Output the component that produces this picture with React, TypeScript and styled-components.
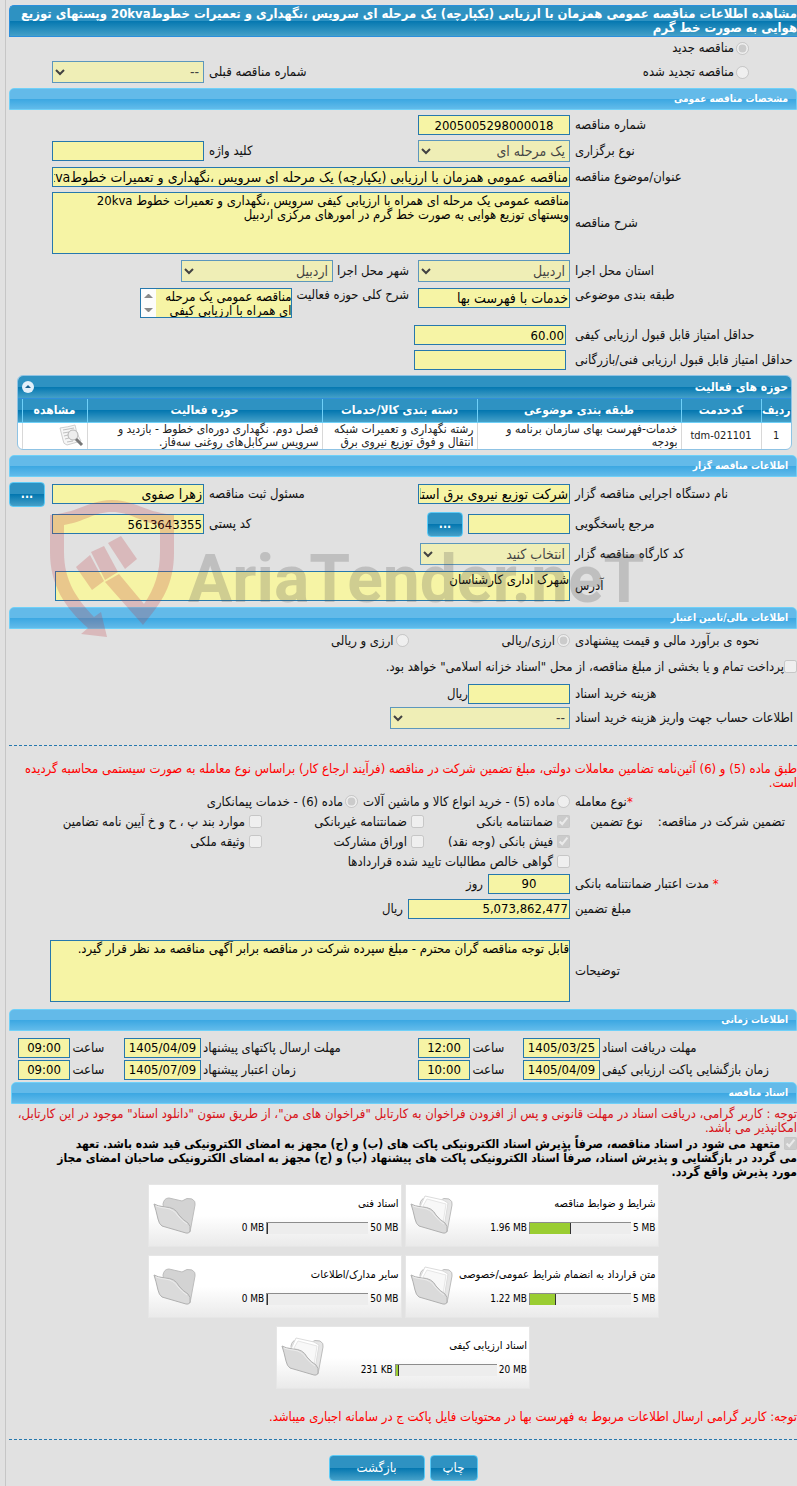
import React, { useId } from "react";
import styled, { createGlobalStyle, css } from "styled-components";

const GlobalStyle = createGlobalStyle`
  *, *::before, *::after { box-sizing: border-box; }
  body {
    margin: 0;
    background: #e1e1e1;
    color: #111;
    font-family: "DejaVu Sans Condensed", "DejaVu Sans", sans-serif;
    font-size: 13px;
    line-height: 14px;
    overflow-x: hidden;
  }
  input, select, textarea, button { font-family: inherit; margin: 0; }
`;

const darkBar = css`
  background: linear-gradient(#2e92c2 0 49%, #0477b0 50%, #45a0c8);
`;

const Page = styled.main`
  margin-left: 5px;
  padding: 5px 0 5px 3px;
  border-left: 1px solid #c6c6c6;
  overflow: hidden;
`;

const PageTitle = styled.h1`
  ${darkBar}
  margin: 0;
  min-height: 32px;
  padding: 1px 0;
  border: 1px solid #2b8fdc;
  border-right: 0;
  border-radius: 5px 0 0 0;
  color: #fff;
  font-size: 13px;
  line-height: 14px;
`;

const SectionTitle = styled.h2<{ $inset?: boolean }>`
  margin: 0 0 0 ${(p) => (p.$inset ? 2 : 0)}px;
  height: 22px;
  padding: 0 8px;
  border: 1px solid #6fd0f8;
  border-radius: 5px 5px 0 0;
  background: linear-gradient(#63bae9 0 49%, #3ba7e2 50%, #62bbea);
  color: #fff;
  font-size: 10px;
  line-height: 20px;
`;

const Body = styled.div<{ $pad?: string; $gap?: number }>`
  position: relative;
  display: flex;
  flex-direction: column;
  gap: ${(p) => p.$gap ?? 5}px;
  padding: ${(p) => p.$pad ?? "5px 0"};
`;

const Row = styled.div<{ $top?: boolean; $height?: number }>`
  display: grid;
  grid-template-columns:
    minmax(0, 222fr) minmax(0, 157fr) minmax(0, 209fr)
    minmax(0, 157fr) minmax(0, 43fr);
  align-items: ${(p) => (p.$top ? "start" : "center")};
  min-height: ${(p) => p.$height ?? 20}px;
  > button { justify-self: end; }
`;

const Label = styled.label`
  justify-self: end;
  text-align: left;
  white-space: nowrap;
`;

const Cell = styled.div<{ $span?: number; $gap?: number; $indent?: boolean }>`
  grid-column: span ${(p) => p.$span ?? 1};
  display: flex;
  align-items: center;
  gap: ${(p) => p.$gap ?? 5}px;
  padding-right: ${(p) => (p.$indent ? 48 : 5)}px;
`;

const Inline = styled.div<{ $top?: boolean }>`
  grid-column: span 3;
  display: flex;
  align-items: ${(p) => (p.$top ? "flex-start" : "center")};
  gap: 4px;
  padding-right: 9px;
`;

const fieldLook = css`
  border: 1px solid #2678ad;
  border-radius: 0;
  background: #f6f4a5;
  color: #000;
`;

const Field = styled.input<{ $w?: string; $center?: boolean }>`
  ${fieldLook}
  width: ${(p) => p.$w ?? "100%"};
  height: 20px;
  padding: 0 1px;
  font-size: ${(p) => (p.dir === "ltr" ? 13 : 14)}px;
  text-align: ${(p) => (p.$center ? "center" : "right")};
`;

const Area = styled.textarea<{ $w: string; $h: number }>`
  ${fieldLook}
  display: block;
  width: ${(p) => p.$w};
  max-width: 100%;
  height: ${(p) => p.$h}px;
  padding: 1px 0;
  font-size: 13px;
  line-height: 14px;
  resize: none;
  overflow: hidden;
`;

const Select = styled.select<{ $w?: string }>`
  ${fieldLook}
  width: ${(p) => p.$w ?? "100%"};
  height: 22px;
  font-size: 14px;
  opacity: 0.7;
`;

const ScrollBox = styled.div`
  display: flex;
  width: 152px;
  height: 30px;
  border: 1px solid #2678ad;
  textarea { flex: 1; height: 28px; border: 0; min-width: 0; }
`;

const ScrollStrip = styled.svg`
  width: 15px;
  height: 28px;
  background: #fcfcfc;
`;

const Tick = styled.input`
  flex: none;
  width: 13px;
  height: 13px;
  vertical-align: -2px;
`;

const Choice = styled.label<{ $gap?: number }>`
  display: inline-flex;
  align-items: center;
  gap: ${(p) => p.$gap ?? 2}px;
  white-space: nowrap;
`;

const CreditChoice = styled(Choice)`
  min-height: 18px;
`;

const Button = styled.button<{ $w: number }>`
  ${darkBar}
  width: ${(p) => p.$w}px;
  height: 26px;
  padding: 0;
  border: 1px solid #5ccbf7;
  border-radius: 4px;
  color: #fff;
  font-size: 13px;
`;

const MoreButton = styled(Button)`
  height: 25px;
  font-size: 12px;
  font-weight: 700;
`;

const Panel = styled.section`
  margin: 0 5px 0 8px;
  border: 1px solid #8fc3e4;
  border-radius: 6px;
  overflow: hidden;
  background: #fff;
`;

const PanelHead = styled.div`
  ${darkBar}
  display: flex;
  align-items: center;
  justify-content: space-between;
  height: 23px;
  padding: 0 3px 0 4px;
  border-bottom: 1px solid #2f8fdb;
  color: #fff;
  h3 { margin: 0; font-size: 12px; }
`;

const Collapse = styled.button`
  width: 12px;
  height: 12px;
  padding: 0;
  border: 0;
  border-radius: 50%;
  background: #e3f0fa;
  svg { display: block; }
`;

const Table = styled.table`
  width: 100%;
  table-layout: fixed;
  border-collapse: collapse;
  th {
    ${darkBar}
    height: 23px;
    padding: 0;
    border-left: 1px solid #6fd0f8;
    border-bottom: 1px solid #6fd0f8;
    color: #fff;
    font-size: 12px;
    white-space: nowrap;
  }
  td {
    height: 26px;
    padding: 0 3px;
    border-left: 1px solid #d8d8d8;
    color: #222;
    font-size: 12px;
    line-height: 13px;
    text-align: right;
  }
  td.mid { font-size: 11px; text-align: center; }
  th:last-child, td:last-child { border-left: 0; }
  td svg { display: block; }
`;

const Rule = styled.hr`
  width: 100%;
  margin: 0;
  border: 0;
  border-top: 1px dashed #2678ad;
`;

const Notice = styled.p<{ $dark?: boolean }>`
  margin: 0 0 2px;
  color: ${(p) => (p.$dark ? "#d81118" : "#f00")};
`;

const Pledge = styled.p`
  margin: 0;
  color: #000;
  font-size: 12px;
  font-weight: 700;
`;

const Star = styled.span`
  color: #f00;
`;

const TickGrid = styled.div`
  display: grid;
  grid-template-columns: 146px 162px 1fr;
  padding-right: 5px;
`;

const GuaranteeRow = styled.div`
  display: grid;
  grid-template-columns: minmax(0, 222fr) minmax(0, 566fr);
  align-items: center;
  min-height: 20px;
`;

const AmountRows = styled.div`
  display: grid;
  gap: 5px;
  padding-top: 2px;
`;

const GroupLabel = styled.div`
  display: flex;
  gap: 15px;
  padding-right: 12px;
  white-space: nowrap;
`;

const TimeRow = styled.div`
  display: grid;
  grid-template-columns:
    minmax(0, 195fr) minmax(0, 95fr) minmax(0, 37fr) minmax(0, 52fr)
    minmax(0, 215fr) minmax(0, 96fr) minmax(0, 37fr) minmax(0, 52fr)
    minmax(0, 9fr);
  align-items: center;
`;

const DateCell = styled.div`
  padding-right: 2px;
`;

const HourLabel = styled(Label)`
  justify-self: center;
`;

const Cards = styled.div`
  display: flex;
  flex-wrap: wrap;
  justify-content: center;
  gap: 8px 3px;
  width: 520px;
  max-width: 100%;
  margin: 0 auto;
`;

const Card = styled.article`
  display: flex;
  align-items: center;
  width: 254px;
  height: 63px;
  padding: 0 2px 0 4px;
  border: 1px solid #e6e6e6;
  background: linear-gradient(#fff 50%, #eaeaea);
  color: #000;
`;

const CardText = styled.div`
  flex: 1;
  min-width: 0;
  display: flex;
  flex-direction: column;
  gap: 12px;
  h3 {
    margin: 0;
    font-size: 11px;
    line-height: 13px;
    font-weight: 400;
    white-space: nowrap;
  }
`;

const Usage = styled.div`
  display: flex;
  align-items: center;
  gap: 2px;
  font-size: 10px;
  line-height: 12px;
  span { direction: ltr; white-space: nowrap; }
`;

const Meter = styled.div`
  width: 102px;
  height: 12px;
  direction: ltr;
  border-top: 1px solid #8c8c8c;
  border-left: 1px solid #8c8c8c;
  background: #ededed;
`;

const MeterFill = styled.div`
  height: 11px;
  min-width: 1px;
  border-right: 1px solid #333;
  background: #9acd32;
`;

const Actions = styled.div`
  display: flex;
  justify-content: center;
  gap: 5px;
  padding-top: 15px;
`;

const Watermark = styled.svg`
  position: absolute;
  left: 31px;
  top: 13px;
  width: 620px;
  height: 155px;
  pointer-events: none;
  z-index: 1;
`;

const WordMark = styled.text`
  font-family: Roboto, "Liberation Sans", sans-serif;
  font-weight: 700;
  direction: ltr;
`;

const Spacer = styled.div<{ $h: number }>`
  height: ${(p) => p.$h}px;
`;

type TextFieldProps = {
  label: string;
  value?: string;
  w?: string;
  center?: boolean;
  ltr?: boolean;
};

function TextPair({ label, value = "", w, center, ltr }: TextFieldProps) {
  const id = useId();
  return (
    <>
      <Label htmlFor={id}>{label}</Label>
      <Cell>
        <Field id={id} $w={w} $center={center} dir={ltr ? "ltr" : "rtl"} value={value} readOnly />
      </Cell>
    </>
  );
}

function SelectPair({ label, value, w }: { label: string; value: string; w?: string }) {
  const id = useId();
  return (
    <>
      <Label htmlFor={id}>{label}</Label>
      <Cell>
        <Select id={id} $w={w} disabled>
          <option>{value}</option>
        </Select>
      </Cell>
    </>
  );
}

function Toggle({ kind, label, on, gap }: { kind: "radio" | "checkbox"; label: string; on?: boolean; gap?: number }) {
  return (
    <Choice $gap={gap}>
      <Tick type={kind} checked={!!on} disabled readOnly />
      {label}
    </Choice>
  );
}

function FolderIcon({ filled }: { filled: boolean }) {
  return (
    <svg width="44" height="40" viewBox="0 0 44 40" aria-hidden="true">
      <path
        d="M10 9Q11 3 16 3L29 6Q34 2 39 4Q43 6 42 10L37 37L34 36L12 24Z"
        fill={filled ? "#e6e6e6" : "#d3d3d3"}
        stroke="#bdbdbd"
      />
      {filled && (
        <>
          <path d="M10 12L15 1L33 5L38 8L34 32L26 24Z" fill="#fff" stroke="#dcdcdc" />
          <path d="M13 11L17 4L36 9L33 28Z" fill="#f8f8f8" stroke="#e6e6e6" />
        </>
      )}
      <path
        d="M1 9Q4 11 12 12Q22 12 26 20Q30 25 35 28Q38 31 37 36Q36 39 33 38L9 31Q6 29 5 24Q3 15 1 9Z"
        fill="#dadada"
        stroke="#b0b0b0"
      />
      <path d="M3 11Q8 13 12 13Q21 14 25 21Q29 26 34 29" fill="none" stroke="#ededed" />
    </svg>
  );
}

function ViewIcon() {
  return (
    <svg width="25" height="24" viewBox="0 0 25 24" aria-hidden="true">
      <path d="M1 4Q9 3 16 1Q17 10 22 17L8 21Q4 20 4 16Z" fill="#f6f6f6" stroke="#cfcfcf" />
      <path d="M4 6L15 4M4 9L10 8M5 12L9 11M6 15L10 14M8 18L14 17" stroke="#c0c0c0" />
      <circle cx="14" cy="11" r="5" fill="#ececec" fillOpacity="0.8" stroke="#b5b5b5" />
      <path d="M17 15L23 21" stroke="#777" strokeWidth="3" />
    </svg>
  );
}

function Logo() {
  return (
    <Watermark viewBox="0 0 620 155" aria-hidden="true">
      <g fill="#bf323c" fillOpacity="0.23">
        <path d="M10 25C40 22 50 10 72 10C94 10 104 22 134 25L134 62C134 95 122 112 103 135L65 92L79 84L104 114C115 98 120 82 120 62L120 35C100 32 90 22 72 22C54 22 44 32 24 35L24 62C24 92 38 110 54 127L61 122L67 147L41 144L48 138C25 118 10 95 10 62Z" />
        <path d="M68 53L81 46L97 69L85 79Z" />
        <path d="M51 62L64 56L78 82L65 90Z" />
        <path d="M36 77L50 65L64 91L52 100Z" />
      </g>
      <WordMark x="148" y="112" fontSize="66" fill="#555" fillOpacity="0.24">
        AriaTender.neT
      </WordMark>
    </Watermark>
  );
}

type TimeProps = { label: string; date: string; time: string };

function TimePair({ label, date, time }: TimeProps) {
  const dateId = useId();
  const timeId = useId();
  return (
    <>
      <Label htmlFor={dateId}>{label}</Label>
      <DateCell>
        <Field id={dateId} $w="77px" $center dir="ltr" value={date} readOnly />
      </DateCell>
      <HourLabel htmlFor={timeId}>ساعت</HourLabel>
      <div>
        <Field id={timeId} $w="52px" $center dir="ltr" value={time} readOnly />
      </div>
    </>
  );
}

const documents = [
  { title: "شرایط و ضوابط مناقصه", limit: "5 MB", used: "1.96 MB", percent: 41 },
  { title: "اسناد فنی", limit: "50 MB", used: "0 MB", percent: 0 },
  { title: "متن قرارداد به انضمام شرایط عمومی/خصوصی", limit: "5 MB", used: "1.22 MB", percent: 26 },
  { title: "سایر مدارک/اطلاعات", limit: "50 MB", used: "0 MB", percent: 0 },
  { title: "اسناد ارزیابی کیفی", limit: "20 MB", used: "231 KB", percent: 3 },
];

export default function App() {
  return (
    <Page dir="rtl" lang="fa">
      <GlobalStyle />
      <PageTitle>
        مشاهده اطلاعات مناقصه عمومی همزمان با ارزیابی (یکپارچه) یک مرحله ای سرویس ،نگهداری و تعمیرات خطوط20kva وپستهای توزیع هوایی به صورت خط گرم
      </PageTitle>

      <Body $pad="3px 0 5px">
        <Row $height={16}>
          <Cell $span={5} $indent>
            <Toggle kind="radio" label="مناقصه جدید" on />
          </Cell>
        </Row>
        <Row>
          <Cell $span={2} $indent>
            <Toggle kind="radio" label="مناقصه تجدید شده" />
          </Cell>
          <SelectPair label="شماره مناقصه قبلی" value="--" />
        </Row>
      </Body>

      <SectionTitle>مشخصات مناقصه عمومی</SectionTitle>
      <Body>
        <Row>
          <TextPair label="شماره مناقصه" value="2005005298000018" center ltr />
        </Row>
        <Row>
          <SelectPair label="نوع برگزاری" value="یک مرحله ای" />
          <TextPair label="کلید واژه" />
        </Row>
        <Row>
          <Label htmlFor="subject">عنوان/موضوع مناقصه</Label>
          <Cell $span={3}>
            <Field id="subject" readOnly value="مناقصه عمومی همزمان با ارزیابی (یکپارچه) یک مرحله ای سرویس ،نگهداری و تعمیرات خطوط20kva وپستهای توزیع هوایی به صورت خط گرم" />
          </Cell>
        </Row>
        <Row>
          <Label htmlFor="details">شرح مناقصه</Label>
          <Cell $span={3}>
            <Area
              id="details"
              $w="100%"
              $h={62}
              readOnly
              value="مناقصه عمومی یک مرحله ای همراه با ارزیابی کیفی سرویس ،نگهداری و تعمیرات خطوط 20kva وپستهای توزیع هوایی به صورت خط گرم در امورهای مرکزی اردبیل"
            />
          </Cell>
        </Row>
        <Row $height={24}>
          <SelectPair label="استان محل اجرا" value="اردبیل" />
          <Inline>
            <label htmlFor="city">شهر محل اجرا</label>
            <Select id="city" $w="152px" disabled>
              <option>اردبیل</option>
            </Select>
          </Inline>
        </Row>
        <Row $top $height={32}>
          <TextPair label="طبقه بندی موضوعی" value="خدمات با فهرست بها" />
          <Inline $top>
            <label htmlFor="scope">شرح کلی حوزه فعالیت</label>
            <ScrollBox>
              <Area id="scope" $w="auto" $h={28} readOnly value="مناقصه عمومی یک مرحله ای همراه با ارزیابی کیفی" />
              <ScrollStrip viewBox="0 0 15 28" aria-hidden="true">
                <path d="M3 9H12L8 5H7ZM3 19H12L8 23H7Z" fill="#8a8a8a" />
              </ScrollStrip>
            </ScrollBox>
          </Inline>
        </Row>
        <Row>
          <Label htmlFor="minQuality">حداقل امتیاز قابل قبول ارزیابی کیفی</Label>
          <Inline>
            <Field id="minQuality" $w="152px" dir="ltr" value="60.00" readOnly />
          </Inline>
        </Row>
        <Row>
          <Label htmlFor="minTech">حداقل امتیاز قابل قبول ارزیابی فنی/بازرگانی</Label>
          <Inline>
            <Field id="minTech" $w="152px" dir="ltr" value="" readOnly />
          </Inline>
        </Row>
      </Body>

      <Panel>
        <PanelHead>
          <h3>حوزه های فعالیت</h3>
          <Collapse type="button" aria-label="بستن">
            <svg width="12" height="12" viewBox="0 0 12 12" aria-hidden="true">
              <path d="M3 7L6 4L9 7Z" fill="#19608f" />
            </svg>
          </Collapse>
        </PanelHead>
        <Table>
          <colgroup>
            <col width="30" />
            <col width="80" />
            <col />
            <col width="155" />
            <col width="235" />
            <col width="65" />
            <col width="4" />
          </colgroup>
          <thead>
            <tr>
              <th>ردیف</th>
              <th>کدخدمت</th>
              <th>طبقه بندی موضوعی</th>
              <th>دسته بندی کالا/خدمات</th>
              <th>حوزه فعالیت</th>
              <th>مشاهده</th>
              <th aria-hidden="true" />
            </tr>
          </thead>
          <tbody>
            <tr>
              <td className="mid">1</td>
              <td className="mid">tdm-021101</td>
              <td>خدمات-فهرست بهای سازمان برنامه و بودجه</td>
              <td>رشته نگهداری و تعمیرات شبکه انتقال و فوق توزیع نیروی برق</td>
              <td>فصل دوم. نگهداری دوره‌ای خطوط - بازدید و سرویس سرکابل‌های روغنی سه‌فاز.</td>
              <td><ViewIcon /></td>
              <td aria-hidden="true" />
            </tr>
          </tbody>
        </Table>
      </Panel>
      <Spacer $h={5} />

      <SectionTitle>اطلاعات مناقصه گزار</SectionTitle>
      <Body $pad="5px 0 6px">
        <Logo />
        <Row $height={25}>
          <TextPair label="نام دستگاه اجرایی مناقصه گزار" value="شرکت توزیع نیروی برق استان اردبیل" />
          <TextPair label="مسئول ثبت مناقصه" value="زهرا صفوی" />
          <MoreButton type="button" $w={36}>...</MoreButton>
        </Row>
        <Row $height={25}>
          <Label htmlFor="contact">مرجع پاسخگویی</Label>
          <Cell>
            <Field id="contact" $w="102px" value="" readOnly />
            <MoreButton type="button" $w={36}>...</MoreButton>
          </Cell>
          <TextPair label="کد پستی" value="5613643355" ltr />
        </Row>
        <Row $height={24}>
          <SelectPair label="کد کارگاه مناقصه گزار" value="انتخاب کنید" w="150px" />
        </Row>
        <Row $height={30}>
          <Label htmlFor="address">آدرس</Label>
          <Cell $span={3}>
            <Area id="address" $w="515px" $h={30} readOnly value="شهرک اداری کارشناسان" />
          </Cell>
        </Row>
      </Body>

      <SectionTitle>اطلاعات مالی/تامین اعتبار</SectionTitle>
      <Body $pad="0 0 5px">
        <Row $height={24}>
          <Label as="span">نحوه ی برآورد مالی و قیمت پیشنهادی</Label>
          <Cell $span={4} $gap={93}>
            <Toggle kind="radio" label="ارزی/ریالی" on />
            <Toggle kind="radio" label="ارزی و ریالی" />
          </Cell>
        </Row>
        <CreditChoice $gap={0}>
          <Tick type="checkbox" checked={false} disabled readOnly />
          پرداخت تمام و یا بخشی از مبلغ مناقصه، از محل "اسناد خزانه اسلامی" خواهد بود.
        </CreditChoice>
        <div>
          <Row $height={26}>
            <Label htmlFor="cost">هزینه خرید اسناد</Label>
            <Cell $span={2} $gap={0}>
              <Field id="cost" $w="102px" value="" readOnly />
              ریال
            </Cell>
          </Row>
          <Row $height={22}>
            <Label htmlFor="account">اطلاعات حساب جهت واریز هزینه خرید اسناد</Label>
            <Cell $span={2}>
              <Select id="account" $w="180px" disabled>
                <option>--</option>
              </Select>
            </Cell>
          </Row>
        </div>
      </Body>

      <Body $pad="11px 0 7px">
        <Rule />
        <Spacer $h={6} />
        <div>
          <Notice>
            طبق ماده (5) و (6) آئین‌نامه تضامین معاملات دولتی، مبلغ تضمین شرکت در مناقصه (فرآیند ارجاع کار) براساس نوع معامله به صورت سیستمی محاسبه گردیده است.
          </Notice>
          <GuaranteeRow>
            <Label as="span"><Star>*</Star>نوع معامله</Label>
            <Cell>
              <Toggle kind="radio" label="ماده (5) - خرید انواع کالا و ماشین آلات" />
              <Toggle kind="radio" label="ماده (6) - خدمات پیمانکاری" on />
            </Cell>
          </GuaranteeRow>
          <GuaranteeRow>
            <GroupLabel>
              <span>تضمین شرکت در مناقصه:</span>
              <span>نوع تضمین</span>
            </GroupLabel>
            <TickGrid>
              <Toggle kind="checkbox" label="ضمانتنامه بانکی" on gap={4} />
              <Toggle kind="checkbox" label="ضمانتنامه غیربانکی" gap={4} />
              <Toggle kind="checkbox" label="موارد بند پ ، ح و خ آیین نامه تضامین" gap={4} />
            </TickGrid>
          </GuaranteeRow>
          <GuaranteeRow>
            <span />
            <TickGrid>
              <Toggle kind="checkbox" label="فیش بانکی (وجه نقد)" on gap={4} />
              <Toggle kind="checkbox" label="اوراق مشارکت" gap={4} />
              <Toggle kind="checkbox" label="وثیقه ملکی" gap={4} />
            </TickGrid>
          </GuaranteeRow>
          <GuaranteeRow>
            <span />
            <Cell>
              <Toggle kind="checkbox" label="گواهی خالص مطالبات تایید شده قراردادها" gap={4} />
            </Cell>
          </GuaranteeRow>
          <AmountRows>
            <Row>
              <Label htmlFor="validity"><Star>*</Star> مدت اعتبار ضمانتنامه بانکی</Label>
              <Cell $span={2}>
                <Field id="validity" $w="82px" $center dir="ltr" value="90" readOnly />
                روز
              </Cell>
            </Row>
            <Row>
              <Label htmlFor="amount">مبلغ تضمین</Label>
              <Cell $span={2}>
                <Field id="amount" $w="162px" dir="ltr" value="5,073,862,477" readOnly />
                ریال
              </Cell>
            </Row>
          </AmountRows>
        </div>
        <Spacer $h={11} />
        <Row>
          <Label htmlFor="notes">توضیحات</Label>
          <Cell $span={4}>
            <Area id="notes" $w="520px" $h={62} readOnly value="قابل توجه مناقصه گران محترم - مبلغ سپرده شرکت در مناقصه برابر آگهی مناقصه مد نظر قرار گیرد." />
          </Cell>
        </Row>
      </Body>

      <SectionTitle>اطلاعات زمانی</SectionTitle>
      <Body $pad="7px 0 2px" $gap={2}>
        <TimeRow>
          <TimePair label="مهلت دریافت اسناد" date="1405/03/25" time="12:00" />
          <TimePair label="مهلت ارسال پاکتهای پیشنهاد" date="1405/04/09" time="09:00" />
        </TimeRow>
        <TimeRow>
          <TimePair label="زمان بازگشایی پاکت ارزیابی کیفی" date="1405/04/09" time="10:00" />
          <TimePair label="زمان اعتبار پیشنهاد" date="1405/07/09" time="09:00" />
        </TimeRow>
      </Body>

      <SectionTitle $inset>اسناد مناقصه</SectionTitle>
      <Body $pad="3px 0 0">
        <div>
          <Notice $dark>
            توجه : کاربر گرامی، دریافت اسناد در مهلت قانونی و پس از افزودن فراخوان به کارتابل "فراخوان های من"، از طریق ستون "دانلود اسناد" موجود در این کارتابل، امکانپذیر می باشد.
          </Notice>
          <Pledge>
            <label>
              <Tick type="checkbox" checked disabled readOnly /> متعهد می شود در اسناد مناقصه، صرفاً پذیرش اسناد الکترونیکی پاکت های (ب) و (ج) مجهز به امضای الکترونیکی قید شده باشد. تعهد
              <br />
              می گردد در بازگشایی و پذیرش اسناد، صرفاً اسناد الکترونیکی پاکت های پیشنهاد (ب) و (ج) مجهز به امضای الکترونیکی صاحبان امضای مجاز
              <br />
              مورد پذیرش واقع گردد.
            </label>
          </Pledge>
        </div>
        <Cards>
          {documents.map((doc) => (
            <Card key={doc.title}>
              <CardText>
                <h3>{doc.title}</h3>
                <Usage>
                  <span>{doc.limit}</span>
                  <Meter>
                    <MeterFill style={{ width: `${doc.percent}%` }} />
                  </Meter>
                  <span>{doc.used}</span>
                </Usage>
              </CardText>
              <FolderIcon filled={doc.percent > 0} />
            </Card>
          ))}
        </Cards>
      </Body>

      <Body $pad="21px 0 0">
        <Notice>توجه: کاربر گرامی ارسال اطلاعات مربوط به فهرست بها در محتویات فایل پاکت ج در سامانه اجباری میباشد.</Notice>
        <Spacer $h={3} />
        <Rule />
      </Body>
      <Actions>
        <Button type="button" $w={48}>چاپ</Button>
        <Button type="button" $w={96}>بازگشت</Button>
      </Actions>
    </Page>
  );
}
